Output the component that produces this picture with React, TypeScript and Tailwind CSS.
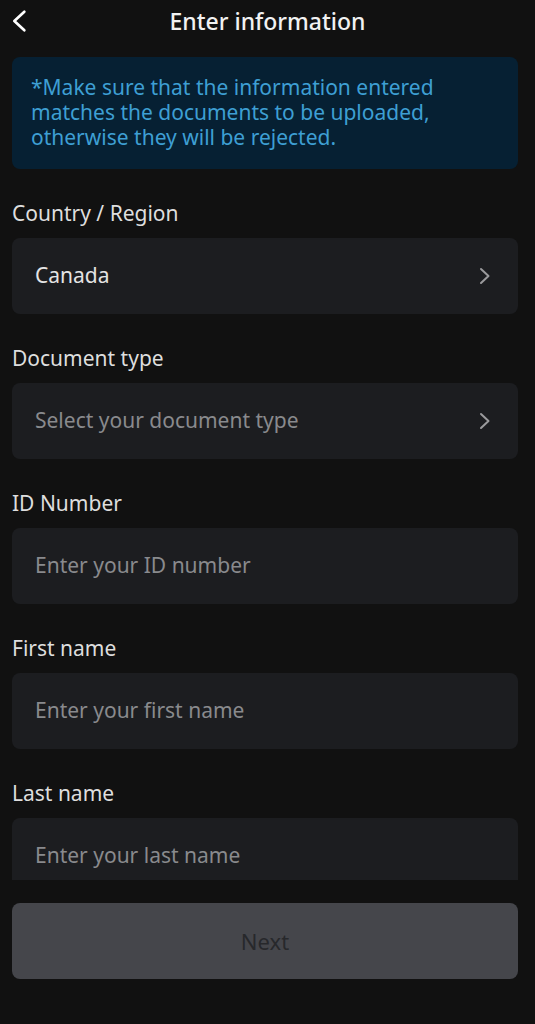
interface Field {
  label: string;
  value?: string;
  placeholder: string;
  select?: boolean;
}

const fields: Field[] = [
  { label: "Country / Region", value: "Canada", placeholder: "", select: true },
  { label: "Document type", placeholder: "Select your document type", select: true },
  { label: "ID Number", placeholder: "Enter your ID number" },
  { label: "First name", placeholder: "Enter your first name" },
  { label: "Last name", placeholder: "Enter your last name" },
];

function Chevron({ dir, className }: { dir: "left" | "right"; className?: string }) {
  return (
    <svg viewBox="0 0 12 18" fill="none" className={className}>
      <path
        d={dir === "right" ? "M2 2l7.5 7-7.5 7" : "M10 2L2.5 9l7.5 7"}
        stroke="currentColor"
        strokeWidth={2}
        strokeLinecap="round"
        strokeLinejoin="round"
      />
    </svg>
  );
}

export default function App() {
  return (
    <div
      className="w-[535px] h-[1024px] bg-[#111111] flex flex-col overflow-hidden"
      style={{ fontFamily: '"Noto Sans", "Open Sans", sans-serif' }}
    >
      {/* Header */}
      <div className="relative h-[42px] flex items-center justify-center shrink-0">
        <Chevron dir="left" className="absolute left-[11px] top-[9px] h-[24px] w-[16px] text-white" />
        <h1 className="text-[23px] text-[#f2f2f2] font-medium leading-none">Enter information</h1>
      </div>

      {/* Scroll area */}
      <div className="h-[838px] shrink-0 overflow-hidden pl-3 pr-[17px] pt-[15px]">
        <div className="rounded-[8px] bg-[#062033] px-[19px] pt-[18px] pb-[19px]">
          <p className="text-[21px] leading-[25px] text-[#3e9fd3]">
            *Make sure that the information entered matches the documents to be uploaded, otherwise they will be rejected.
          </p>
        </div>

        <div className="flex flex-col gap-[31px] pt-[31px]">
          {fields.map((f) => (
            <div key={f.label} className="flex flex-col">
              <label className="text-[21px] leading-[26px] text-[#dedede] mb-[12px]">{f.label}</label>
              <div className="h-[76px] rounded-[8px] bg-[#1c1d20] flex items-center pl-[23px] pr-[27px]">
                <span className={`flex-1 text-[21px] ${f.value ? "text-[#e4e4e4]" : "text-[#898a8d]"}`}>
                  {f.value ?? f.placeholder}
                </span>
                {f.select && <Chevron dir="right" className="h-[18px] w-[12px] text-[#9a9a9c]" />}
              </div>
            </div>
          ))}
        </div>
      </div>

      {/* Footer */}
      <div className="shrink-0 pl-3 pr-[17px] pt-[23px]">
        <button className="w-full h-[76px] rounded-[8px] bg-[#45464b] text-[22px] text-[#27282b]">Next</button>
      </div>
    </div>
  );
}
